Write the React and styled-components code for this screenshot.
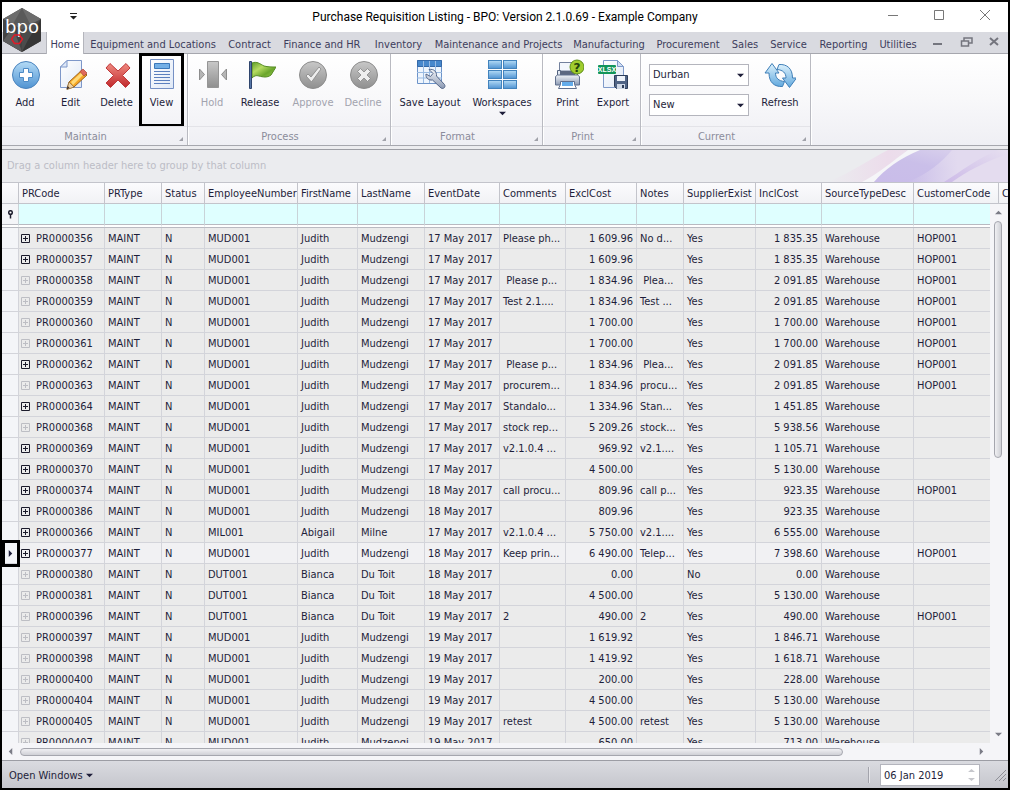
import React from "react";
import styled, { createGlobalStyle } from "styled-components";

const GlobalStyle = createGlobalStyle`
  * {
    box-sizing: border-box;
  }

  body {
    margin: 0;
    font-family: "DejaVu Sans Condensed", "Noto Sans", sans-serif;
    font-size: 11px;
    line-height: 14px;
    color: #1e1e3a;
  }

  button,
  input,
  select {
    font: inherit;
    color: inherit;
    margin: 0;
  }
`;

const Window = styled.div`
  display: flex;
  flex-direction: column;
  height: 100vh;
  border: 2px solid #000;
  background: #ececef;
  overflow: hidden;
`;

const Header = styled.header`
  position: relative;
`;

const Logo = styled.svg`
  position: absolute;
  left: 0;
  top: 5px;
  width: 41px;
  height: 46px;
`;

const TitleBar = styled.div`
  display: grid;
  grid-template-columns: 1fr auto 1fr;
  align-items: center;
  height: 30px;
  background: #fff;
`;

const QuickAccess = styled.button`
  width: 16px;
  height: 16px;
  margin-left: 63px;
  padding: 0;
  border: 0;
  background: none;
`;

const Title = styled.h1`
  margin: 0;
  font: 12px/16px Roboto, sans-serif;
  color: #000;
`;

const WindowButtons = styled.div`
  display: flex;
  justify-content: flex-end;
`;

const WindowButton = styled.button`
  width: 46px;
  height: 28px;
  padding: 0;
  border: 0;
  background: none;
`;

const TabBar = styled.nav`
  display: flex;
  height: 22px;
  padding-left: 45px;
  background: #d9dae0;
  border-bottom: 1px solid #a6a7ae;
`;

const Tab = styled.button`
  flex: none;
  width: ${(p) => p.$width}px;
  height: 22px;
  padding: 4px 0 0;
  border: 0;
  white-space: nowrap;
  color: #3d3d5c;
  background: ${(p) => (p.$active ? "#fff" : "none")};
  box-shadow: ${(p) => (p.$active ? "-1px 0 #b4b5bc, 1px 0 #b4b5bc" : "none")};
`;

const MdiButtons = styled.div`
  display: flex;
  margin-left: auto;
`;

const MdiButton = styled.button`
  width: 28px;
  height: 21px;
  padding: 2px 0 0;
  border: 0;
  background: none;
`;

const Ribbon = styled.div`
  display: flex;
  flex: none;
  height: 92px;
  background: linear-gradient(#fff, #f8f8fa 50%, #efeff4);
  border-bottom: 1px solid #a6a7ae;
`;

const Group = styled.section`
  display: flex;
  flex-direction: column;
  border-right: 1px solid #b9bac1;
  box-shadow: 1px 0 #fff;
`;

const GroupItems = styled.div`
  display: flex;
  flex: 1;
  padding: 0 ${(p) => p.$right}px 0 ${(p) => p.$left}px;
`;

const GroupCaption = styled.div`
  position: relative;
  height: 19px;
  padding: 3px 18px 0 0;
  text-align: center;
  color: #8b8c9b;
  border-top: 1px solid #e3e3e8;

  &::after {
    content: "";
    position: absolute;
    right: 4px;
    bottom: 4px;
    border: 2px solid transparent;
    border-right-color: #a0a1a9;
    border-bottom-color: #a0a1a9;
  }
`;

const Tool = styled.button`
  position: relative;
  display: flex;
  flex-direction: column;
  align-items: center;
  width: ${(p) => p.$width}px;
  padding: 5px 0 0;
  border: 0;
  background: none;
  white-space: nowrap;

  &:disabled {
    color: #a2a3ae;
  }

  svg {
    flex: none;
  }

  span {
    margin-top: 5px;
  }

  &::after {
    content: "";
    display: ${(p) => (p.$marked ? "block" : "none")};
    position: absolute;
    inset: -1px -1px;
    border: 3px solid #000;
  }
`;

const Combos = styled.div`
  display: flex;
  flex-direction: column;
  gap: 8px;
  width: 100px;
  margin-right: 5px;
  padding-top: 10px;
`;

const Combo = styled.label`
  position: relative;
  display: block;

  select {
    display: block;
    width: 100%;
    height: 22px;
    padding: 0 3px;
    appearance: none;
    border: 1px solid #b4b5bd;
    border-radius: 0;
    background: #fff;
  }

  svg {
    position: absolute;
    right: 5px;
    top: 8px;
  }
`;

const GroupPanel = styled.div`
  display: flex;
  justify-content: space-between;
  align-items: center;
  flex: none;
  height: 33px;
  margin-top: 3px;
  padding-left: 5px;
  border-top: 1px solid #9c9da4;
  background: #ebecef;
  color: #bcbdc6;

  svg {
    height: 32px;
  }
`;

const Grid = styled.div`
  position: relative;
  flex: 1;
  min-height: 0;
  overflow: hidden;
  background: #ebebeb;
`;

const Table = styled.table`
  width: 1098px;
  table-layout: fixed;
  border-spacing: 0;
`;

const HeadCell = styled.th`
  height: 22px;
  padding: 1px 3px 0;
  overflow: hidden;
  text-align: left;
  font-weight: normal;
  white-space: nowrap;
  background: linear-gradient(#fbfbfd, #f1f2f5);
  border: solid #c3c4cb;
  border-width: 1px 1px 1px 0;
`;

const FilterRow = styled.tr`
  background: #fff;

  td {
    height: 24px;
    padding: 0;
    background: #dfffff padding-box;
    border-right: 1px solid #c9d3d8;
    border-bottom: 4px double #b9bac1;
  }

  td:first-child {
    background-color: #f4f5f8;
  }

  svg {
    display: block;
    margin: auto;
  }

  input {
    display: block;
    width: 100%;
    height: 20px;
    padding: 0 3px;
    border: 0;
    background: none;
  }
`;

const Row = styled.tr`
  background: ${(p) => (p.$focused ? "#f1f1f3" : "#ebebeb")};
`;

const Cell = styled.td`
  height: 21px;
  padding: 1px 3px 0 ${(p) => (p.$tight ? 2 : 3)}px;
  overflow: hidden;
  white-space: pre;
  text-align: ${(p) => (p.$numeric ? "right" : "left")};
  border: solid #d3d4da;
  border-width: 0 1px 1px 0;
`;

const Indicator = styled.td`
  position: relative;
  padding: 0;
  background: #f4f5f8;
  border: solid #d3d4da;
  border-width: 0 1px 1px 0;

  svg {
    display: block;
    margin: auto;
  }

  &::after {
    content: "";
    display: ${(p) => (p.$marked ? "block" : "none")};
    position: absolute;
    z-index: 1;
    inset: -3px -2px -4px 0;
    border: 3px solid #000;
  }
`;

const Code = styled.div`
  display: flex;
  align-items: flex-start;
  gap: 6px;
`;

const Expander = styled.button`
  display: flex;
  padding: 2px 0 0;
  border: 0;
  background: none;
  color: ${(p) => (p.$empty ? "#bdbec4" : "#1b1b2b")};
`;

const VerticalScroll = styled.div`
  position: absolute;
  top: 22px;
  right: 0;
  bottom: 0;
  display: flex;
  flex-direction: column;
  align-items: center;
  gap: 5px;
  width: 18px;
  padding: 5px 2px 5px 0;
  background: #f5f5f8;
`;

const HorizontalScroll = styled.div`
  display: flex;
  align-items: center;
  flex: none;
  gap: 6px;
  height: 18px;
  padding: 0 23px 0 5px;
  background: #f5f5f8;
  border-bottom: 1px solid #9c9da4;
`;

const Track = styled.div`
  display: flex;
  flex-direction: ${(p) => (p.$vertical ? "column" : "row")};
  flex: 1;
`;

const Thumb = styled.div`
  width: ${(p) => (p.$vertical ? "8px" : p.$size)};
  height: ${(p) => (p.$vertical ? p.$size : "8px")};
  border: 1px solid #a5a6ae;
  border-radius: 4px;
  background: linear-gradient(${(p) => (p.$vertical ? "to right" : "to bottom")}, #f0f0f3, #cfd0d6);
`;

const StatusBar = styled.footer`
  display: flex;
  align-items: center;
  flex: none;
  height: 27px;
  padding: 0 2px 0 7px;
  background: linear-gradient(#dadbe0, #c5c6cd);
`;

const OpenWindows = styled.button`
  display: flex;
  align-items: center;
  gap: 3px;
  margin-right: auto;
  padding: 2px 0 0;
  border: 0;
  background: none;
`;

const DateBox = styled.label`
  display: flex;
  align-items: center;
  width: 100px;
  height: 22px;
  margin: 0 14px 0 10px;
  padding-right: 4px;
  border: 1px solid #b4b5bd;
  background: #fff;

  input {
    flex: 1;
    min-width: 0;
    padding: 2px 3px 0;
    border: 0;
    background: none;
  }
`;

const Divider = styled.div`
  width: 2px;
  height: 16px;
  background: #a3a4ac;
  border-right: 1px solid #e6e6ea;
`;

const Arrow = ({ dir = "down", color = "#1e1e3a", size = 7 }) => {
  const turn = { down: 0, left: 90, up: 180, right: 270 }[dir];
  return (
    <svg width={size} height={size} viewBox="0 0 8 8" aria-hidden="true">
      <path d="M0 2h8L4 6z" fill={color} transform={`rotate(${turn} 4 4)`} />
    </svg>
  );
};

const Icon = ({ children }) => (
  <svg width="32" height="32" viewBox="0 0 32 32" aria-hidden="true">
    {children}
  </svg>
);

const Gradients = () => (
  <svg width="0" height="0" style={{ position: "absolute" }} aria-hidden="true">
    <defs>
      <linearGradient id="blue" x2="0" y2="1">
        <stop stopColor="#b4dbf6" />
        <stop offset="1" stopColor="#4f93d2" />
      </linearGradient>
      <linearGradient id="sky" x2="0" y2="1">
        <stop stopColor="#dcf1fc" />
        <stop offset="1" stopColor="#62a9de" />
      </linearGradient>
      <linearGradient id="red" x2="0" y2="1">
        <stop stopColor="#f08a80" />
        <stop offset="1" stopColor="#c0282c" />
      </linearGradient>
      <linearGradient id="gray" x2="0" y2="1">
        <stop stopColor="#c8c8c8" />
        <stop offset="1" stopColor="#8f8f8f" />
      </linearGradient>
      <linearGradient id="green" x2="1" y2="1">
        <stop stopColor="#5d9c26" />
        <stop offset=".35" stopColor="#b6dc62" />
        <stop offset=".65" stopColor="#6aa62c" />
        <stop offset="1" stopColor="#a4d150" />
      </linearGradient>
      <linearGradient id="paper" x2="1" y2="1">
        <stop stopColor="#fff" />
        <stop offset="1" stopColor="#dfe8f6" />
      </linearGradient>
      <linearGradient id="steel" x2="0" y2="1">
        <stop stopColor="#f1f4f8" />
        <stop offset="1" stopColor="#8b99b3" />
      </linearGradient>
    </defs>
  </svg>
);

const AddIcon = () => (
  <Icon>
    <circle cx="17" cy="16" r="13.5" fill="url(#blue)" stroke="#4a83bd" />
    <path d="M14.500 9.500h5v4h4v5h-4v4h-5v-4h-4v-5h4z" fill="#fff" stroke="#4d8bc6" />
  </Icon>
);

const EditIcon = () => (
  <Icon>
    <path d="M12 1.500h14.500v27H5.500V8z" fill="url(#paper)" stroke="#7d97c9" />
    <path d="M12 1.500V8H5.500z" fill="#dde7f7" stroke="#7d97c9" />
    <path d="M12 30l2-7L27 11l5 5-13 12z" fill="#f5a623" stroke="#9c6420" />
    <path d="M16 23l12-11 2 2-12 12z" fill="#ffd978" />
    <path d="M25 12.500l3-2.500 4 4-3 3z" fill="#e06a5c" stroke="#a94538" strokeWidth=".7" />
    <path d="M14 23l5 5-7 2.500z" fill="#efd3a4" stroke="#8a6a3c" strokeWidth=".7" />
    <path d="M12.700 27l2 2-3.200 1.500z" fill="#40312a" />
  </Icon>
);

const DeleteIcon = () => (
  <Icon>
    <path
      d="M9 4.500l8 7.500 8-7.500 4 4.500-7.500 7.500L29 24l-4.500 4.500L17 21l-7.500 7.500L5 24l7.500-7.500L5 9z"
      fill="url(#red)"
      stroke="#c0383a"
      strokeLinejoin="round"
    />
  </Icon>
);

const ViewIcon = () => (
  <Icon>
    <path d="M4.500.500h23v29h-23z" fill="url(#paper)" stroke="#7590c4" />
    <path d="M8.500 4.500h15v5h-15z" fill="#73afe6" stroke="#3b78ba" />
    <path d="M8 12.500h16M8 15.500h16M8 18.500h16M8 21.500h16M8 24.500h16" stroke="#5b7fbe" />
  </Icon>
);

const HoldIcon = () => (
  <Icon>
    <path d="M3.500 10l5 5.500-5 5.500zM30.500 10l-5 5.500 5 5.500z" fill="#b5b5b5" stroke="#8d8d8d" />
    <path d="M11.500 2.500h11v26h-11z" fill="url(#gray)" stroke="#959595" />
  </Icon>
);

const ReleaseIcon = () => (
  <Icon>
    <path d="M8 4c5-2 8 1 12 3 4 1 8 1 12 1-2 3-3 5-5 8-4 3-8 2-12 1-3-1-5 0-7 2z" fill="url(#green)" stroke="#568c25" />
    <path d="M5.500 2.500h2v27h-2z" fill="#5777a8" stroke="#2f456d" />
  </Icon>
);

const ApproveIcon = () => (
  <Icon>
    <circle cx="16" cy="16" r="13.500" fill="url(#gray)" stroke="#8c8c8c" />
    <path d="M9 17l2-2 3 3 8-10 2 2-9.500 13z" fill="#eee" stroke="#858585" strokeWidth=".8" />
  </Icon>
);

const DeclineIcon = () => (
  <Icon>
    <circle cx="17" cy="16" r="13.500" fill="url(#gray)" stroke="#8c8c8c" />
    <path
      d="M13.500 9.500L17 13l3.500-3.500 3 3L20 16l3.500 3.500-3 3L17 19l-3.500 3.500-3-3L14 16l-3.500-3.500z"
      fill="#eee"
      stroke="#858585"
      strokeWidth=".8"
    />
  </Icon>
);

const SaveLayoutIcon = () => (
  <Icon>
    <path d="M3.500 1.500h24v23h-24z" fill="#eef5fd" stroke="#6c93c9" />
    <path d="M3.500 1.500h24v6h-24z" fill="#4788cc" stroke="#3569a8" />
    <path d="M3 13.500h25M3 19h25M9.500 2v22M15.500 2v22M21.500 2v22" stroke="#9abbe2" />
    <path
      d="M15 10.500c5-1 8 2.500 7.500 6.500l8 8.500c1.500 2.500-1 5-3.500 3.500L18.500 21c-4 .5-7-2-6.500-6l4.500 2.500 2.500-3z"
      fill="url(#steel)"
      stroke="#556789"
    />
  </Icon>
);

const WorkspacesIcon = () => (
  <Icon>
    {[1.5, 11.5, 21.5].map((y) => (
      <g key={y} fill="url(#blue)" stroke="#4283bd">
        <rect x="2.500" y={y} width="13" height="8" />
        <rect x="17.500" y={y} width="13" height="8" />
      </g>
    ))}
  </Icon>
);

const PrintIcon = () => (
  <Icon>
    <path d="M7.500 12V3.500h15V12z" fill="#f3f7fd" stroke="#73819d" />
    <path d="M5.500 11.500h3v4h14v-4h3v5h-20z" fill="#dfe6f0" stroke="#53627f" />
    <path d="M8 12h15v4H8z" fill="#5b6780" />
    <path d="M3.500 17.500l2-1.500h20l2 1.500v8.500h-24z" fill="url(#steel)" stroke="#61708e" strokeLinejoin="round" />
    <path d="M8.500 22.500h14v3l2 4h-18l2-4z" fill="#fff" stroke="#5f6f8e" />
    <path d="M10 23h11v4H10z" fill="#64acea" />
    <circle cx="25" cy="8" r="7" fill="#a0cc2e" stroke="#5d8e18" />
    <text x="25" y="12.500" textAnchor="middle" fontSize="12" fontWeight="bold" fontFamily="DejaVu Sans" fill="#23420c">
      ?
    </text>
  </Icon>
);

const ExportIcon = () => (
  <Icon>
    <path d="M6.500 1.500h14l6 6v21h-20z" fill="url(#paper)" stroke="#7f9ac9" />
    <path d="M20.500 1.500v6h6z" fill="#d2def2" stroke="#7f9ac9" />
    <rect x="1" y="6" width="18" height="9" rx="1" fill="#12955a" />
    <text x="10" y="13" textAnchor="middle" fontSize="7" fontWeight="bold" fontFamily="Liberation Sans" fill="#fff">
      XLSX
    </text>
    <path d="M17.500 16.500h13v13h-11l-2-2z" fill="#4f6385" stroke="#2d3d5a" />
    <path d="M20 17h8v5h-8z" fill="#eef3fa" />
    <path d="M20 25h8v5h-8z" fill="#cfd8e6" />
    <path d="M25 26h2v3h-2z" fill="#2d3d5a" />
  </Icon>
);

const RefreshIcon = () => (
  <Icon>
    <g fill="url(#sky)" stroke="#3f7fb8" strokeLinejoin="round">
      <path d="M8 4.500l7 9.500h-3.500c0 5 3 8 9 8.500l-2 5c-8 .5-13.500-4-13.500-13.500H1z" />
      <path d="M25.500 28.500l-7-9.500H22c0-5-3-8-9-8.500l2-5c8-.5 13.500 4 13.500 13.500H32.500z" />
    </g>
  </Icon>
);

const BpoLogo = () => (
  <Logo viewBox="0 0 41 46" role="img" aria-label="bpo">
    <path d="M20 1l19 11v22L20 45 1 34V12z" fill="#4b4b4b" />
    <path d="M20 1l19 11-19 10L1 12z" fill="#6c6c6c" />
    <path d="M20 1l8 16-8 5-9-5z" fill="#5a5a5a" />
    <path d="M1 12l19 11v22L1 34z" fill="#444" />
    <path d="M20 45l19-11V12L26 33z" fill="#363636" />
    <path d="M1 34l10-14 9 25z" fill="#5d5d5d" />
    <text x="20" y="26" textAnchor="middle" fontSize="18" fontFamily="DejaVu Sans" fill="#fff">
      bpo
    </text>
    <path d="M12.500 28h5l3 4-3 4.500h-5l-3-4.500z" fill="none" stroke="#e01c28" strokeWidth="1.500" />
  </Logo>
);

const Swoosh = () => (
  <svg width="180" height="32" viewBox="0 0 180 32" aria-hidden="true">
    <defs>
      <linearGradient id="violet" x1="0" y1="1" x2="1" y2="0">
        <stop stopColor="#c9bce9" />
        <stop offset=".45" stopColor="#cabfe9" />
        <stop offset="1" stopColor="#e0d9ee" />
      </linearGradient>
      <linearGradient id="pink">
        <stop stopColor="#ebecef" />
        <stop offset=".6" stopColor="#ecdceb" />
        <stop offset="1" stopColor="#ebe2ed" />
      </linearGradient>
      <linearGradient id="fade">
        <stop stopColor="#e2daef" stopOpacity="0" />
        <stop offset=".5" stopColor="#e2daef" />
      </linearGradient>
      <linearGradient id="lilac" x1="0" y1="1" x2="1" y2="0">
        <stop stopColor="#cdbbe8" />
        <stop offset="1" stopColor="#e6dff0" />
      </linearGradient>
    </defs>
    <path d="M0 32C24 22 44 8 60 0h40L50 32z" fill="url(#pink)" />
    <path d="M34 32C50 24 66 10 80 0h16C76 8 60 20 46 32z" fill="#f5f5f8" />
    <path d="M46 32C56 20 72 8 92 0h88v32z" fill="url(#violet)" />
    <path d="M80 32C100 24 114 12 124 0h56v32z" fill="url(#fade)" />
    <path d="M116 32C132 22 150 8 170 0h10v32z" fill="url(#lilac)" />
    <path d="M124 32c14-10 32-20 56-28v28z" fill="#e4dcef" />
  </svg>
);

const tabs = [
  ["Home", 36],
  ["Equipment and Locations", 140],
  ["Contract", 53],
  ["Finance and HR", 92],
  ["Inventory", 61],
  ["Maintenance and Projects", 139],
  ["Manufacturing", 82],
  ["Procurement", 76],
  ["Sales", 38],
  ["Service", 49],
  ["Reporting", 61],
  ["Utilities", 48],
];

const columns = [
  ["PRCode", 86],
  ["PRType", 57],
  ["Status", 43],
  ["EmployeeNumber", 93],
  ["FirstName", 60],
  ["LastName", 67],
  ["EventDate", 75],
  ["Comments", 66],
  ["ExclCost", 71],
  ["Notes", 47],
  ["SupplierExist", 72],
  ["InclCost", 66],
  ["SourceTypeDesc", 92],
  ["CustomerCode", 85],
  ["C", 101],
];

const judith = ["MUD001", "Judith", "Mudzengi"];
const abigail = ["MIL001", "Abigail", "Milne"];
const bianca = ["DUT001", "Bianca", "Du Toit"];

// code, has details, employee, day in May, comments, excl, notes, supplier, incl, customer
const rows = [
  ["356", 1, judith, 17, "Please ph...", "1 609.96", "No d...", "Yes", "1 835.35", "HOP001"],
  ["357", 1, judith, 17, "", "1 609.96", "", "Yes", "1 835.35", "HOP001"],
  ["358", 0, judith, 17, " Please p...", "1 834.96", " Plea...", "Yes", "2 091.85", "HOP001"],
  ["359", 0, judith, 17, "Test 2.1....", "1 834.96", "Test ...", "Yes", "2 091.85", "HOP001"],
  ["360", 0, judith, 17, "", "1 700.00", "", "Yes", "1 700.00", "HOP001"],
  ["361", 0, judith, 17, "", "1 700.00", "", "Yes", "1 700.00", "HOP001"],
  ["362", 1, judith, 17, " Please p...", "1 834.96", " Plea...", "Yes", "2 091.85", "HOP001"],
  ["363", 0, judith, 17, "procurem...", "1 834.96", "procu...", "Yes", "2 091.85", "HOP001"],
  ["364", 1, judith, 17, "Standalo...", "1 334.96", "Stan...", "Yes", "1 451.85", ""],
  ["368", 0, judith, 17, "stock rep...", "5 209.26", "stock...", "Yes", "5 938.56", ""],
  ["369", 1, judith, 17, "v2.1.0.4 ...", "969.92", "v2.1....", "Yes", "1 105.71", ""],
  ["370", 1, judith, 17, "", "4 500.00", "", "Yes", "5 130.00", ""],
  ["374", 1, judith, 18, "call procu...", "809.96", "call p...", "Yes", "923.35", "HOP001"],
  ["386", 1, judith, 18, "", "809.96", "", "Yes", "923.35", ""],
  ["366", 1, abigail, 17, "v2.1.0.4 ...", "5 750.00", "v2.1....", "Yes", "6 555.00", ""],
  ["377", 1, judith, 18, "Keep prin...", "6 490.00", "Telep...", "Yes", "7 398.60", "HOP001"],
  ["380", 0, bianca, 18, "", "0.00", "", "No", "0.00", ""],
  ["381", 0, bianca, 18, "", "4 500.00", "", "Yes", "5 130.00", ""],
  ["396", 0, bianca, 19, "2", "490.00", "2", "Yes", "490.00", "HOP001"],
  ["397", 0, judith, 19, "", "1 619.92", "", "Yes", "1 846.71", ""],
  ["398", 0, judith, 19, "", "1 419.92", "", "Yes", "1 618.71", ""],
  ["400", 0, judith, 19, "", "200.00", "", "Yes", "228.00", ""],
  ["404", 0, judith, 19, "", "4 500.00", "", "Yes", "5 130.00", ""],
  ["405", 0, judith, 19, "retest", "4 500.00", "retest", "Yes", "5 130.00", ""],
  ["407", 0, judith, 19, "", "650.00", "", "Yes", "713.00", ""],
];

const focusedCode = "377";

function RibbonGroup({ caption, left = 2, right = 4, children }) {
  return (
    <Group aria-label={caption}>
      <GroupItems $left={left} $right={right}>
        {children}
      </GroupItems>
      <GroupCaption>{caption}</GroupCaption>
    </Group>
  );
}

function ToolButton({ icon, label, width, disabled, marked, menu }) {
  return (
    <Tool $width={width} $marked={marked} disabled={disabled}>
      {icon}
      <span>{label}</span>
      {menu && <Arrow />}
    </Tool>
  );
}

function ComboBox({ label, options }) {
  return (
    <Combo>
      <select aria-label={label}>
        {options.map((option) => (
          <option key={option}>{option}</option>
        ))}
      </select>
      <Arrow />
    </Combo>
  );
}

function RequisitionRow({ row }) {
  const [code, details, employee, day, comments, excl, notes, supplier, incl, customer] = row;
  const focused = code === focusedCode;
  return (
    <Row $focused={focused}>
      <Indicator $marked={focused}>
        {focused && <Arrow dir="right" />}
      </Indicator>
      <Cell $tight>
        <Code>
          <Expander $empty={!details} aria-label="Expand">
            <svg width="9" height="9" viewBox="0 0 9 9">
              <path d="M.5.5h8v8h-8zM2 4.500h5M4.500 2v5" fill="none" stroke="currentColor" />
            </svg>
          </Expander>
          {`PR0000${code}`}
        </Code>
      </Cell>
      <Cell>MAINT</Cell>
      <Cell>N</Cell>
      {employee.map((value) => (
        <Cell key={value}>{value}</Cell>
      ))}
      <Cell>{`${day} May 2017`}</Cell>
      <Cell>{comments}</Cell>
      <Cell $numeric>{excl}</Cell>
      <Cell>{notes}</Cell>
      <Cell>{supplier}</Cell>
      <Cell $numeric>{incl}</Cell>
      <Cell>Warehouse</Cell>
      <Cell>{customer}</Cell>
      <Cell />
    </Row>
  );
}

function App() {
  return (
    <Window>
      <GlobalStyle />
      <Gradients />
      <Header>
        <TitleBar>
          <QuickAccess aria-label="Customize toolbar">
            <svg width="9" height="8" viewBox="0 0 9 8">
              <path d="M1 1h7v1H1zM1 4h7L4.500 7.500z" fill="#222" />
            </svg>
          </QuickAccess>
          <Title>Purchase Requisition Listing - BPO: Version 2.1.0.69 - Example Company</Title>
          <WindowButtons>
            {["M1 6.500h10", "M1.500 1.500h9v9h-9z", "M1 1l10 10M11 1L1 11"].map((d, i) => (
              <WindowButton key={d} aria-label={["Minimize", "Maximize", "Close"][i]}>
                <svg width="12" height="12" viewBox="0 0 12 12">
                  <path d={d} fill="none" stroke="#777" />
                </svg>
              </WindowButton>
            ))}
          </WindowButtons>
        </TitleBar>
        <TabBar>
          {tabs.map(([name, width], i) => (
            <Tab key={name} $width={width} $active={i === 0}>
              {name}
            </Tab>
          ))}
          <MdiButtons>
            {["M1 8h9", "M4 5V2h8v5H9M1.500 5h7v5h-7z", "M2 2l8 7M10 2L2 9"].map((d, i) => (
              <MdiButton key={d} aria-label={["Minimize child", "Restore child", "Close child"][i]}>
                <svg width="13" height="12" viewBox="0 0 13 12">
                  <path d={d} fill="none" stroke="#74757e" strokeWidth={i === 1 ? 1.5 : 2} />
                </svg>
              </MdiButton>
            ))}
          </MdiButtons>
        </TabBar>
        <BpoLogo />
      </Header>

      <Ribbon>
        <RibbonGroup caption="Maintain" left={0}>
          <ToolButton icon={<AddIcon />} label="Add" width={46} />
          <ToolButton icon={<EditIcon />} label="Edit" width={45} />
          <ToolButton icon={<DeleteIcon />} label="Delete" width={47} />
          <ToolButton icon={<ViewIcon />} label="View" width={43} marked />
        </RibbonGroup>
        <RibbonGroup caption="Process">
          <ToolButton icon={<HoldIcon />} label="Hold" width={44} disabled />
          <ToolButton icon={<ReleaseIcon />} label="Release" width={52} />
          <ToolButton icon={<ApproveIcon />} label="Approve" width={54} disabled />
          <ToolButton icon={<DeclineIcon />} label="Decline" width={46} disabled />
        </RibbonGroup>
        <RibbonGroup caption="Format" left={3}>
          <ToolButton icon={<SaveLayoutIcon />} label="Save Layout" width={72} />
          <ToolButton icon={<WorkspacesIcon />} label="Workspaces" width={72} menu />
        </RibbonGroup>
        <RibbonGroup caption="Print">
          <ToolButton icon={<PrintIcon />} label="Print" width={45} />
          <ToolButton icon={<ExportIcon />} label="Export" width={46} />
        </RibbonGroup>
        <RibbonGroup caption="Current" left={8}>
          <Combos>
            <ComboBox label="Site" options={["Durban"]} />
            <ComboBox label="Status" options={["New"]} />
          </Combos>
          <ToolButton icon={<RefreshIcon />} label="Refresh" width={52} />
        </RibbonGroup>
      </Ribbon>

      <GroupPanel>
        Drag a column header here to group by that column
        <Swoosh />
      </GroupPanel>

      <Grid>
        <Table>
          <colgroup>
            <col width="17" />
            {columns.map(([name, width]) => (
              <col key={name} width={width} />
            ))}
          </colgroup>
          <thead>
            <tr>
              <HeadCell />
              {columns.map(([name]) => (
                <HeadCell key={name}>{name}</HeadCell>
              ))}
            </tr>
          </thead>
          <tbody>
            <FilterRow>
              <td>
                <svg width="7" height="9" viewBox="0 0 7 9">
                  <circle cx="3.500" cy="2.500" r="1.800" fill="#fff" stroke="#1e1e2e" strokeWidth="1.500" />
                  <path d="M3.500 4v4.500" stroke="#1e1e2e" strokeWidth="1.500" />
                </svg>
              </td>
              {columns.map(([name]) => (
                <td key={name}>
                  <input aria-label={`Filter ${name}`} />
                </td>
              ))}
            </FilterRow>
            {rows.map((row) => (
              <RequisitionRow key={row[0]} row={row} />
            ))}
          </tbody>
        </Table>
        <VerticalScroll>
          <Arrow dir="up" color="#7b7c86" />
          <Track $vertical>
            <Thumb $vertical $size="47%" />
          </Track>
          <Arrow color="#7b7c86" />
        </VerticalScroll>
      </Grid>

      <HorizontalScroll>
        <Arrow dir="left" color="#7b7c86" />
        <Track>
          <Thumb $size="86.5%" />
        </Track>
        <Arrow dir="right" color="#7b7c86" />
      </HorizontalScroll>

      <StatusBar>
        <OpenWindows>
          Open Windows
          <Arrow />
        </OpenWindows>
        <Divider />
        <DateBox>
          <input aria-label="Date" defaultValue="06 Jan 2019" />
          <svg width="7" height="16" viewBox="0 0 7 16">
            <path d="M0 5h7L3.500 2zM0 11h7l-3.500 3z" fill="#c6c7cc" />
          </svg>
        </DateBox>
        <svg width="12" height="12" viewBox="0 0 12 12" aria-hidden="true">
          <path d="M1 12L12 1M5 12l7-7M9 12l3-3" stroke="#8f9098" />
        </svg>
      </StatusBar>
    </Window>
  );
}

export default App;
